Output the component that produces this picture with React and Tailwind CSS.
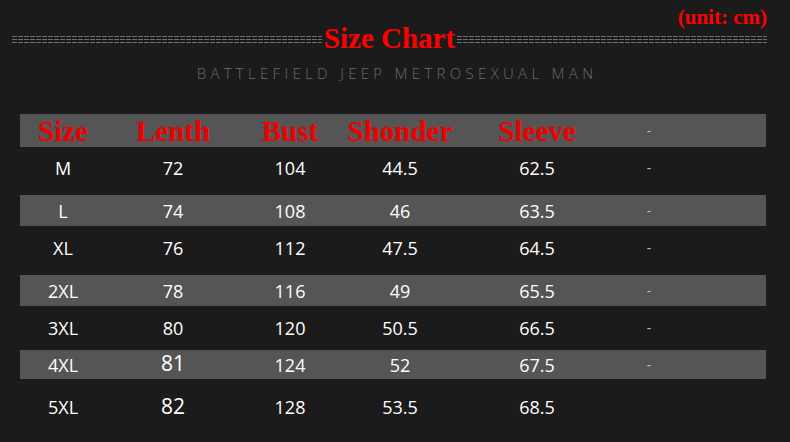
import React from "react";

const rows = [
  { s: "M", l: "72", b: "104", sh: "44.5", sl: "62.5", d: "-", gray: false, h: "h-[48px]", pb: "pb-[6px]" },
  { s: "L", l: "74", b: "108", sh: "46", sl: "63.5", d: "-", gray: true, h: "h-[31px]", pb: "pb-0" },
  { s: "XL", l: "76", b: "112", sh: "47.5", sl: "64.5", d: "-", gray: false, h: "h-[49px]", pb: "pb-[6px]" },
  { s: "2XL", l: "78", b: "116", sh: "49", sl: "65.5", d: "-", gray: true, h: "h-[31px]", pb: "pb-0" },
  { s: "3XL", l: "80", b: "120", sh: "50.5", sl: "66.5", d: "-", gray: false, h: "h-[44px]", pb: "pb-0" },
  { s: "4XL", l: "81", b: "124", sh: "52", sl: "67.5", d: "-", gray: true, h: "h-[29px]", pb: "pb-0", big: true },
  { s: "5XL", l: "82", b: "128", sh: "53.5", sl: "68.5", d: "", gray: false, h: "h-[56px]", pb: "pb-0", big: true },
];

function Dashes({ id }) {
  return (
    <svg className="flex-1 h-[9px] block mt-[4px]" preserveAspectRatio="none">
      <defs>
        <pattern id={id} width="6" height="3" patternUnits="userSpaceOnUse">
          <rect x="0" y="0" width="5" height="1" fill="#6e6e6e" />
        </pattern>
      </defs>
      <rect width="100%" height="9" fill={`url(#${id})`} />
    </svg>
  );
}

const grid = "grid grid-cols-[86px_134px_100px_120px_154px_70px_1fr] items-center text-center";

export default function App() {
  return (
    <div className="w-[790px] h-[442px] bg-[#1c1b1b] overflow-hidden flex flex-col" style={{ fontFamily: "'Open Sans', 'Noto Sans', sans-serif" }}>
      <div className="flex justify-end pr-[23px] pt-[7px] h-[28px]">
        <span className="text-[#f00] font-bold text-[21px] leading-[21px] [font-family:'Liberation_Serif',serif]">(unit: cm)</span>
      </div>
      <div className="flex items-center pl-[12px] pr-[23px] h-[26px] mt-[-3px]">
        <Dashes id="dpl" />
        <span className="text-[#f00] font-bold text-[29px] leading-[26px] px-[2px] [font-family:'Liberation_Serif',serif]">Size Chart</span>
        <Dashes id="dpr" />
      </div>
      <div className="flex justify-center mt-[13px] pl-[4px]">
        <span className="text-[#6a6a6a] text-[15px] leading-[18px] font-light tracking-[4.3px]">BATTLEFIELD JEEP METROSEXUAL MAN</span>
      </div>
      <div className="mt-[32px] ml-[20px] w-[746px] flex flex-col">
        <div className={`${grid} h-[33px] bg-[#555555] text-[#ee0000] font-bold text-[29px] leading-[28px] [font-family:'Liberation_Serif',serif]`}>
          <span>Size</span>
          <span>Lenth</span>
          <span>Bust</span>
          <span>Shonder</span>
          <span>Sleeve</span>
          <span className="text-[#bbbbbb] text-[14px] font-normal [font-family:'Open_Sans',sans-serif]">-</span>
          <span></span>
        </div>
        {rows.map((r) => (
          <div key={r.s} className={`${grid} ${r.h} ${r.pb} ${r.gray ? "bg-[#555555]" : ""} text-white text-[18px] leading-[22px]`}>
            <span>{r.s}</span>
            <span className={r.big ? "text-[21px] leading-[22px] -mt-[3px]" : ""}>{r.l}</span>
            <span>{r.b}</span>
            <span>{r.sh}</span>
            <span>{r.sl}</span>
            <span className="text-[#bbbbbb] text-[14px]">{r.d}</span>
            <span></span>
          </div>
        ))}
      </div>
    </div>
  );
}
